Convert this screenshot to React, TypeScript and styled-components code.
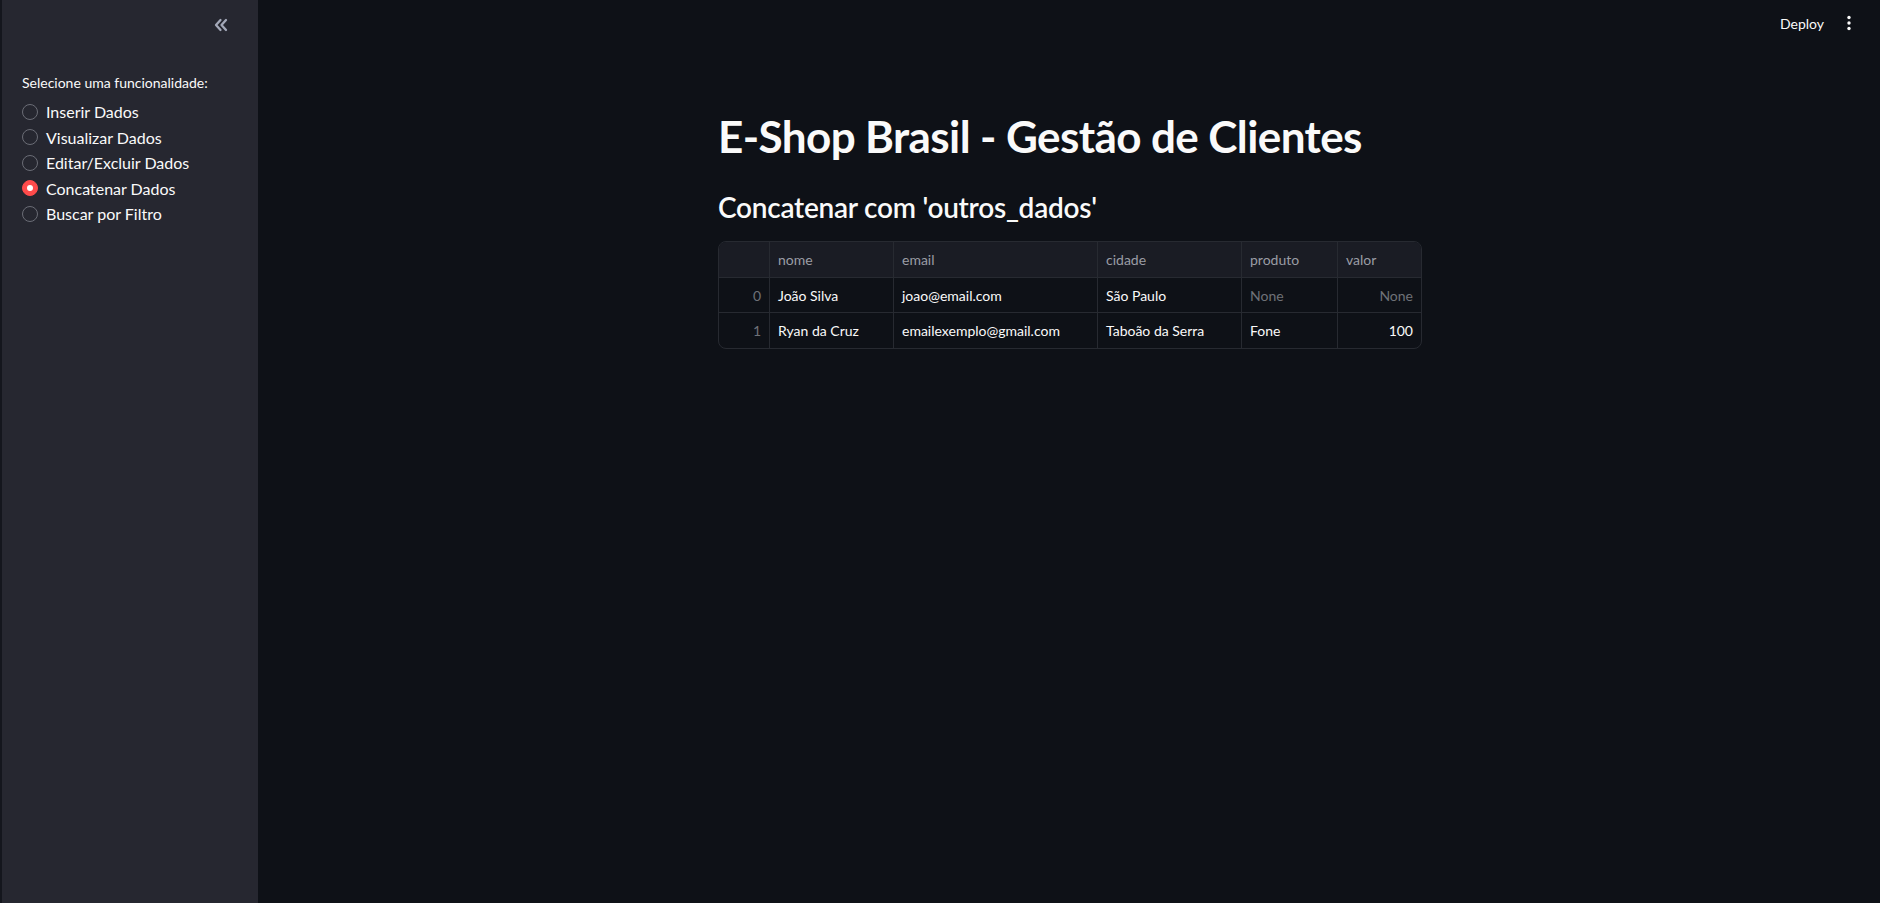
import React from "react";
import styled, { createGlobalStyle } from "styled-components";

const GlobalStyle = createGlobalStyle`
  html, body {
    margin: 0;
    padding: 0;
    background: #0e1117;
    color: #fafafa;
    font-family: "Lato", "Noto Sans", sans-serif;
  }
  * { box-sizing: border-box; }
`;

const options = [
  "Inserir Dados",
  "Visualizar Dados",
  "Editar/Excluir Dados",
  "Concatenar Dados",
  "Buscar por Filtro",
];

const columns = [
  { key: "idx", label: "", width: 51, align: "right" },
  { key: "nome", label: "nome", width: 124, align: "left" },
  { key: "email", label: "email", width: 204, align: "left" },
  { key: "cidade", label: "cidade", width: 144, align: "left" },
  { key: "produto", label: "produto", width: 96, align: "left" },
  { key: "valor", label: "valor", width: 84, align: "right" },
];

const rows: any[] = [
  { idx: "0", nome: "João Silva", email: "joao@email.com", cidade: "São Paulo", produto: null, valor: null },
  { idx: "1", nome: "Ryan da Cruz", email: "emailexemplo@gmail.com", cidade: "Taboão da Serra", produto: "Fone", valor: "100" },
];

const App = () => {
  const [selected, setSelected] = React.useState(3);

  return (
    <>
      <GlobalStyle />
      <Page>
        <Sidebar>
          <SideTop>
            <Collapse>
              <svg width="16" height="16" viewBox="0 0 16 16" fill="none">
                <path d="M7.5 3L3 8l4.5 5M13 3L8.5 8l4.5 5" stroke="#a3a8b8" strokeWidth="2.3" strokeLinecap="round" strokeLinejoin="round" />
              </svg>
            </Collapse>
          </SideTop>
          <SideBody>
            <RadioLabel>Selecione uma funcionalidade:</RadioLabel>
            <RadioList>
              {options.map((o, i) => (
                <RadioRow key={o} onClick={() => setSelected(i)}>
                  <Circle active={selected === i} />
                  <span>{o}</span>
                </RadioRow>
              ))}
            </RadioList>
          </SideBody>
        </Sidebar>
        <Main>
          <Header>
            <Deploy>Deploy</Deploy>
            <Kebab>
              <svg width="4" height="16" viewBox="0 0 4 16">
                <circle cx="2" cy="2.5" r="1.7" fill="#fafafa" />
                <circle cx="2" cy="8" r="1.7" fill="#fafafa" />
                <circle cx="2" cy="13.5" r="1.7" fill="#fafafa" />
              </svg>
            </Kebab>
          </Header>
          <Content>
            <Title>E-Shop Brasil - Gestão de Clientes</Title>
            <SubTitle>Concatenar com 'outros_dados'</SubTitle>
            <Grid>
              <HeadRow>
                {columns.map((c) => (
                  <HeadCell key={c.key} w={c.width}>
                    {c.label}
                  </HeadCell>
                ))}
              </HeadRow>
              {rows.map((r, ri) => (
                <BodyRow key={ri} last={ri === rows.length - 1}>
                  {columns.map((c) => (
                    <Cell
                      key={c.key}
                      w={c.width}
                      right={c.align === "right"}
                      muted={c.key === "idx" || r[c.key] === null}
                    >
                      {r[c.key] === null ? "None" : r[c.key]}
                    </Cell>
                  ))}
                </BodyRow>
              ))}
            </Grid>
          </Content>
        </Main>
      </Page>
    </>
  );
};

export default App;

const Page = styled.div`
  display: flex;
  width: 100vw;
  height: 100vh;
  overflow: hidden;
`;

const Sidebar = styled.aside`
  width: 258px;
  flex-shrink: 0;
  background: #262730;
  border-left: 2px solid #14161d;
  display: flex;
  flex-direction: column;
`;

const SideTop = styled.div`
  height: 60px;
  display: flex;
  justify-content: flex-end;
  align-items: flex-start;
  padding: 17px 29px 0 0;
`;

const Collapse = styled.div`
  width: 16px;
  height: 16px;
  display: flex;
  cursor: pointer;
`;

const SideBody = styled.div`
  padding: 13px 20px 0 20px;
`;

const RadioLabel = styled.div`
  font-size: 14px;
  line-height: 20px;
  color: #fafafa;
  margin-bottom: 6px;
`;

const RadioList = styled.div`
  display: flex;
  flex-direction: column;
`;

const RadioRow = styled.label`
  display: flex;
  align-items: center;
  gap: 8px;
  height: 25.5px;
  font-size: 16px;
  color: #fafafa;
  cursor: pointer;
`;

const Circle = styled.span<{ active: boolean }>`
  width: 16px;
  height: 16px;
  border-radius: 50%;
  flex-shrink: 0;
  background: ${(p) => (p.active ? "#ff4b4b" : "#262730")};
  border: 1px solid ${(p) => (p.active ? "#ff4b4b" : "#6b6d76")};
  display: flex;
  align-items: center;
  justify-content: center;
  &::after {
    content: "";
    width: 6px;
    height: 6px;
    border-radius: 50%;
    background: #ffffff;
    display: ${(p) => (p.active ? "block" : "none")};
  }
`;

const Main = styled.main`
  flex: 1;
  display: flex;
  flex-direction: column;
  align-items: center;
  position: relative;
`;

const Header = styled.header`
  align-self: stretch;
  height: 46px;
  display: flex;
  justify-content: flex-end;
  align-items: center;
  padding-right: 23px;
  gap: 17px;
`;

const Deploy = styled.div`
  font-size: 14px;
  color: #fafafa;
`;

const Kebab = styled.div`
  display: flex;
  width: 16px;
  justify-content: center;
`;

const Content = styled.div`
  width: 704px;
  padding-top: 64px;
  margin-left: 2px;
`;

const Title = styled.h1`
  margin: 0;
  font-size: 44px;
  font-weight: 700;
  line-height: 53px;
  letter-spacing: -0.6px;
  color: #fafafa;
`;

const SubTitle = styled.h3`
  margin: 27px 0 0 0;
  font-size: 28px;
  font-weight: 600;
  line-height: 34px;
  letter-spacing: -0.25px;
  color: #fafafa;
`;

const Grid = styled.div`
  margin-top: 17px;
  width: 704px;
  border: 1px solid #272a31;
  border-radius: 8px;
  overflow: hidden;
  font-size: 14px;
`;

const HeadRow = styled.div`
  display: flex;
  height: 36px;
  background: #1a1c24;
  border-bottom: 1px solid #272a31;
`;

const HeadCell = styled.div<{ w: number }>`
  width: ${(p) => p.w}px;
  flex-shrink: 0;
  padding: 0 8px;
  display: flex;
  align-items: center;
  color: #9a9ca4;
  border-right: 1px solid #272a31;
  &:last-child { border-right: none; flex: 1; }
`;

const BodyRow = styled.div<{ last: boolean }>`
  display: flex;
  height: 35px;
  border-bottom: ${(p) => (p.last ? "none" : "1px solid #272a31")};
`;

const Cell = styled.div<{ w: number; right: boolean; muted: boolean }>`
  width: ${(p) => p.w}px;
  flex-shrink: 0;
  padding: 0 8px;
  display: flex;
  align-items: center;
  justify-content: ${(p) => (p.right ? "flex-end" : "flex-start")};
  color: ${(p) => (p.muted ? "#6f7178" : "#fafafa")};
  border-right: 1px solid #272a31;
  &:last-child { border-right: none; flex: 1; }
`;
